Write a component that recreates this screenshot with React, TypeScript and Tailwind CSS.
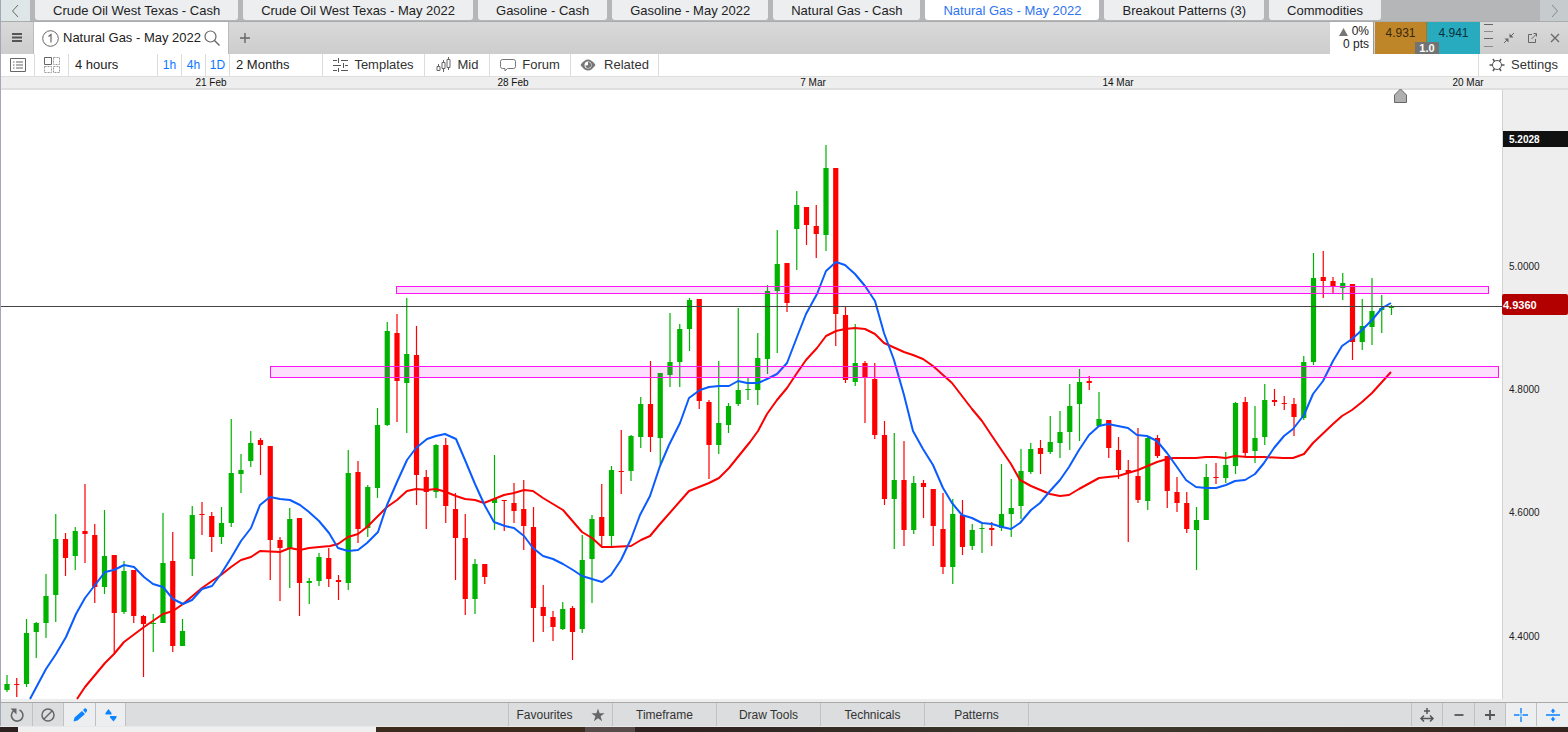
import type { ReactNode } from 'react'
import clsx from 'clsx'

// [colour, high, body top, body bottom, low]
type Candle = ['g' | 'r', number, number, number, number]

const CANDLES: Candle[] = [
  ['g', 675, 684, 690, 692], ['r', 678, 684, 685, 697], ['g', 619, 633, 684, 687], ['g', 622, 623, 632, 658],
  ['g', 574, 596, 623, 638], ['g', 514, 539, 595, 622], ['r', 533, 539, 558, 576], ['g', 527, 531, 556, 570],
  ['r', 484, 531, 534, 563], ['r', 524, 535, 587, 603], ['g', 510, 556, 587, 594], ['r', 555, 555, 613, 653],
  ['g', 561, 571, 612, 614], ['r', 570, 570, 616, 623], ['r', 615, 616, 624, 677], ['g', 614, 623, 624, 652],
  ['g', 513, 563, 623, 623], ['r', 532, 561, 646, 652], ['g', 619, 631, 646, 646], ['g', 506, 515, 559, 576],
  ['r', 502, 514, 515, 535], ['r', 512, 516, 537, 552], ['g', 507, 523, 537, 544], ['g', 419, 473, 523, 527],
  ['g', 454, 470, 474, 493], ['g', 431, 443, 461, 467], ['r', 438, 440, 445, 475], ['r', 446, 446, 540, 580],
  ['r', 537, 540, 548, 601], ['g', 508, 519, 549, 588], ['r', 518, 518, 583, 616], ['g', 578, 581, 583, 604],
  ['g', 553, 557, 581, 586], ['r', 548, 558, 579, 587], ['r', 575, 580, 582, 600], ['g', 450, 473, 583, 590],
  ['r', 461, 472, 529, 543], ['g', 485, 487, 528, 537], ['g', 408, 425, 488, 498], ['g', 322, 331, 425, 426],
  ['r', 314, 333, 381, 422], ['g', 298, 354, 383, 433], ['r', 326, 355, 475, 505], ['r', 470, 477, 492, 529],
  ['g', 444, 445, 492, 498], ['r', 438, 445, 506, 523], ['r', 493, 509, 538, 580], ['r', 514, 538, 599, 615],
  ['g', 559, 564, 599, 614], ['r', 564, 564, 577, 584], ['g', 455, 499, 503, 530], ['r', 500, 500, 501, 531],
  ['r', 483, 503, 511, 523], ['r', 480, 509, 526, 550], ['r', 507, 527, 608, 642], ['r', 585, 607, 616, 632],
  ['r', 611, 617, 627, 641], ['g', 602, 609, 629, 630], ['r', 606, 608, 632, 660], ['g', 535, 560, 629, 633],
  ['g', 515, 519, 559, 603], ['r', 484, 517, 536, 547], ['g', 466, 470, 536, 546], ['r', 430, 471, 472, 494],
  ['g', 435, 436, 471, 481], ['g', 397, 404, 437, 448], ['r', 361, 404, 437, 452], ['g', 373, 373, 438, 464],
  ['g', 313, 362, 375, 387], ['g', 324, 329, 362, 387], ['g', 298, 300, 329, 351], ['r', 299, 299, 401, 409],
  ['r', 400, 402, 445, 479], ['g', 361, 423, 445, 454], ['g', 403, 406, 425, 433], ['g', 308, 390, 404, 406],
  ['g', 377, 389, 390, 400], ['g', 333, 358, 390, 405], ['g', 285, 291, 359, 374], ['g', 230, 264, 291, 353],
  ['r', 263, 263, 303, 312], ['g', 191, 205, 229, 270], ['r', 207, 207, 225, 245], ['r', 205, 226, 234, 258],
  ['g', 145, 168, 235, 251], ['r', 168, 168, 314, 346], ['r', 306, 315, 380, 383], ['g', 324, 363, 382, 386],
  ['r', 361, 363, 377, 423], ['r', 363, 379, 435, 439], ['r', 421, 435, 499, 505], ['g', 433, 480, 499, 549],
  ['r', 441, 480, 530, 546], ['g', 476, 483, 530, 534], ['r', 480, 483, 487, 518], ['r', 489, 489, 526, 546],
  ['r', 493, 529, 567, 574], ['g', 499, 514, 567, 584], ['r', 500, 515, 547, 555], ['g', 524, 530, 546, 550],
  ['g', 522, 528, 529, 553], ['r', 522, 528, 530, 546], ['g', 464, 514, 528, 531], ['g', 479, 508, 514, 537],
  ['g', 449, 471, 506, 519], ['g', 443, 449, 472, 474], ['r', 440, 448, 454, 474], ['g', 416, 442, 452, 454],
  ['g', 411, 432, 443, 458], ['g', 384, 406, 432, 450], ['g', 369, 382, 404, 441], ['r', 376, 381, 383, 390],
  ['g', 392, 419, 426, 426], ['r', 420, 420, 448, 458], ['r', 437, 450, 470, 479], ['r', 460, 470, 473, 542],
  ['r', 428, 476, 500, 503], ['g', 437, 438, 501, 510], ['r', 435, 438, 456, 458], ['r', 456, 456, 491, 508],
  ['r', 477, 492, 503, 512], ['r', 492, 503, 529, 533], ['g', 507, 520, 530, 570], ['g', 464, 477, 520, 520],
  ['r', 463, 477, 478, 484], ['g', 452, 465, 478, 483], ['g', 402, 403, 466, 474], ['r', 397, 402, 453, 457],
  ['g', 406, 438, 451, 463], ['g', 384, 400, 437, 445], ['r', 389, 400, 402, 406], ['r', 396, 403, 404, 410],
  ['r', 398, 404, 417, 436], ['g', 356, 362, 418, 420], ['g', 253, 278, 362, 365], ['r', 251, 277, 281, 298],
  ['r', 277, 281, 287, 294], ['g', 273, 283, 288, 300], ['r', 284, 284, 342, 360], ['g', 299, 326, 342, 350],
  ['g', 278, 311, 327, 345], ['g', 295, 308, 310, 333], ['g', 305, 306, 308, 315],
]

const FAST_AVERAGE =
  '30,699 46,669 56,654 66,637 76,614 85,598 95,585 105,572 114,570 124,565 134,567 144,577 153,584 163,587 173,599 183,604 192,600 202,589 212,586 221,574 231,558 241,541 251,528 260,505 270,497 280,499 290,500 300,505 309,512 319,521 329,533 338,548 348,551 358,550 367,543 378,532 387,505 397,482 407,460 416,448 427,439 436,436 445,434 456,439 465,460 475,484 485,506 494,522 505,526 514,528 524,536 533,548 543,556 553,559 563,564 573,570 582,576 592,579 602,582 611,575 621,560 631,539 640,515 650,496 660,466 669,445 680,423 689,398 700,390 709,387 719,386 729,386 738,381 747,383 758,383 767,379 777,374 787,363 797,337 806,314 817,294 826,271 836,262 845,265 855,274 865,286 875,301 884,333 894,360 904,395 913,431 923,449 933,465 943,488 952,503 962,515 972,518 982,523 992,524 1002,527 1011,529 1020,523 1031,510 1040,503 1050,491 1060,480 1069,467 1079,450 1089,435 1099,426 1108,424 1128,428 1137,435 1147,436 1157,441 1167,453 1177,467 1186,480 1196,487 1206,488 1216,488 1226,485 1235,481 1245,480 1255,474 1264,463 1274,448 1284,436 1293,429 1304,415 1313,394 1323,381 1333,361 1342,346 1352,339 1362,330 1372,320 1382,308 1391,303'

const SLOW_AVERAGE =
  '77,699 85,687 105,663 114,654 124,642 144,627 163,614 173,611 183,604 202,588 212,581 221,575 231,567 241,560 251,557 260,551 280,552 290,548 300,550 309,548 330,546 338,544 348,537 358,534 367,527 387,507 397,500 407,491 416,489 427,490 436,489 446,492 456,496 465,499 475,500 484,503 494,499 504,495 514,493 524,490 533,491 543,498 553,504 563,510 582,532 592,538 602,547 611,547 631,546 641,540 650,536 660,524 689,491 709,483 719,478 729,468 750,442 758,431 767,414 777,400 787,388 797,373 806,360 817,348 826,336 836,331 845,329 855,328 865,329 875,334 884,343 904,352 913,355 923,359 933,366 952,383 972,409 982,421 992,436 1011,464 1020,480 1031,486 1050,494 1060,496 1069,495 1079,489 1099,478 1108,477 1118,476 1138,470 1157,462 1167,459 1173,458 1196,458 1206,457 1216,457 1226,458 1235,456 1247,457 1264,457 1283,458 1293,458 1304,454 1313,443 1333,424 1342,416 1352,410 1362,402 1372,393 1391,372'

const WORKSPACES = [
  'Crude Oil West Texas - Cash',
  'Crude Oil West Texas - May 2022',
  'Gasoline - Cash',
  'Gasoline - May 2022',
  'Natural Gas - Cash',
  'Natural Gas - May 2022',
  'Breakout Patterns (3)',
  'Commodities',
]

const DATES = [
  { label: '21 Feb', x: 211 },
  { label: '28 Feb', x: 513 },
  { label: '7 Mar', x: 813 },
  { label: '14 Mar', x: 1118 },
  { label: '20 Mar', x: 1468 },
]

const PRICES = [
  { label: '5.0000', y: 270 },
  { label: '4.8000', y: 393 },
  { label: '4.6000', y: 516 },
  { label: '4.4000', y: 640 },
]

function Icon({ children }: { children: ReactNode }) {
  return (
    <svg width="16" height="16" viewBox="0 0 16 16" fill="none" stroke="currentColor" aria-hidden="true" className="shrink-0">
      {children}
    </svg>
  )
}

function WorkspaceTabs() {
  return (
    <nav className="flex h-[21px] bg-[#b4b6b8] text-[13px]">
      <button aria-label="Previous" className="w-[29px] shrink-0 bg-[#dfe6e7] flex items-center justify-center text-[#666]">
        <Icon><path d="M10 2 4.500 8 10 14" /></Icon>
      </button>
      <div className="flex-1 flex gap-[5px] pl-[5px] pb-px">
        {WORKSPACES.map((name, i) => (
          <button
            key={name}
            className={clsx(
              'px-[18px] rounded-b-[3px] whitespace-nowrap leading-[19px]',
              i === 5 ? 'bg-white text-[#2f74f0]' : 'bg-[#eceef0] text-[#222]',
            )}
          >
            {name}
          </button>
        ))}
      </div>
      <button aria-label="Next" className="w-7 shrink-0 bg-[#c6cbcd] flex items-center justify-center text-[#888]">
        <Icon><path d="M6 2 11.500 8 6 14" /></Icon>
      </button>
    </nav>
  )
}

function TitleBar() {
  const control = 'w-[23px] flex justify-center'
  return (
    <header className="flex h-[33px] bg-linear-to-b from-[#d9d9d9] to-[#cdcdcd] border-t border-[#a9abad] text-[13px]">
      <button aria-label="Menu" className="w-[33px] border-r border-[#bbb] flex items-center justify-center text-[#555]">
        <Icon><path d="M3 4h10M3 7.500h10M3 11h10" strokeWidth="1.800" /></Icon>
      </button>
      <div className="w-[194px] bg-white flex items-center pl-2 text-[#222]">
        <svg width="17" height="17" viewBox="0 0 17 17" fill="none" stroke="#666" aria-hidden="true">
          <circle cx="8.500" cy="8.500" r="7.800" />
          <path d="M6.500 6.500 9 4.500V12.500" strokeWidth="1.200" />
        </svg>
        <span className="ml-1 flex-1 whitespace-nowrap">Natural Gas - May 2022</span>
        <button aria-label="Search" className="mr-2 text-[#666]">
          <Icon><circle cx="6.500" cy="6.500" r="5.500" strokeWidth="1.200" /><path d="m10.500 10.500 5 5" strokeWidth="1.400" /></Icon>
        </button>
      </div>
      <button aria-label="Add tab" className="w-8 border-l border-[#bbb] flex items-center justify-center text-[#666]">
        <Icon><path d="M8 3v10M3 8h10" strokeWidth="1.400" /></Icon>
      </button>
      <div className="flex-1" />
      <div className="w-11 bg-white border-r border-[#999] pr-1 text-right text-[12px] leading-[13px] pt-[3px] text-[#222]">
        <div className="flex items-center justify-end gap-1">
          <svg width="9" height="8" aria-hidden="true"><path d="M4.500 0 9 8H0z" fill="#777" /></svg>
          0%
        </div>
        <div className="whitespace-nowrap">0 pts</div>
      </div>
      <div className="relative flex pl-px text-[12px] leading-[22px]">
        <button className="w-[52px] bg-[#bf8529] flex justify-center border-r border-[#a87420] text-[#3a2806]">4.931</button>
        <button className="w-[53px] bg-[#28aabf] flex justify-center text-[#08333a]">4.941</button>
        <span className="absolute left-[41px] bottom-0 w-6 h-3 bg-[#737373] text-white font-bold text-[11px] leading-3 text-center">1.0</span>
      </div>
      <div className="flex items-center pr-0.5 text-[#666]">
        <svg width="17" height="30" viewBox="0 0 17 30" stroke="currentColor" aria-hidden="true">
          <path d="M4 1.500h9M4 15.500h9" />
          <path d="M4 8.500h9M4 23.500h9" stroke="#8c8c8c" />
        </svg>
        <button aria-label="Minimise" className={control}>
          <Icon>
            <path d="m9 7 4-4M7 9l-4 4" />
            <path d="M8.500 3.500v4h4zM7.500 12.500v-4h-4z" fill="currentColor" stroke="none" />
          </Icon>
        </button>
        <button aria-label="Pop out" className={control}>
          <Icon><path d="M8 4.500H4.500v8h7V9M7.500 9l5-5M9.500 3.500h3v3" /></Icon>
        </button>
        <button aria-label="Close" className={control}>
          <Icon><path d="m4 4 8 8M12 4l-8 8" strokeWidth="1.200" /></Icon>
        </button>
      </div>
    </header>
  )
}

function Toolbar() {
  const cell = 'border-r border-[#dcdcdc] flex items-center justify-center'
  return (
    <div className="flex h-[22px] bg-white text-[13px] text-[#333]">
      <button aria-label="Watchlist" className={clsx(cell, 'w-[34px] text-[#666]')}>
        <Icon>
          <path d="M.5 1.500h15v13H.5zM6 5h7M6 8h7M6 11h7M3 5h1.500M3 8h1.500M3 11h1.500" />
        </Icon>
      </button>
      <button aria-label="Layout" className={clsx(cell, 'w-[34px] text-[#999]')}>
        <Icon>
          <path d="M.5.5h7v7h-7z" stroke="#666" />
          <path d="M9.500.5h6v7h-6zM.5 9.500h7v6h-7zM9.500 9.500h6v6h-6z" strokeDasharray="2 1" />
        </Icon>
      </button>
      <select aria-label="Interval" className="w-[89px] border-r border-[#dcdcdc] appearance-none pl-[6px] text-[#222]">
        <option>4 hours</option>
      </select>
      <button className={clsx(cell, 'w-6 text-[12px] text-[#0a78ff]')}>1h</button>
      <button className={clsx(cell, 'w-6 text-[12px] text-[#0a78ff]')}>4h</button>
      <button className={clsx(cell, 'w-6 text-[12px] text-[#0a78ff]')}>1D</button>
      <select aria-label="Period" className="w-[93px] border-r border-[#dcdcdc] appearance-none pl-[6px] text-[#222]">
        <option>2 Months</option>
      </select>
      <button className={clsx(cell, 'w-[102px] gap-1.5')}>
        <svg width="15" height="14" viewBox="0 0 15 14" fill="none" stroke="#555" aria-hidden="true">
          <path d="M0 2.500h4M8 2.500h7M5.500 0v5M0 7.500h8M12 7.500h3M10.500 5v5M0 12.500h4M8 12.500h7M5.500 10v4" />
        </svg>
        Templates
      </button>
      <button className={clsx(cell, 'w-[65px] gap-1.5')}>
        <svg width="16" height="16" viewBox="0 0 16 16" fill="none" stroke="#666" aria-hidden="true">
          <path d="M2.500 7v2.500M7.500 3v2.500M7.500 11.500V15M12.500 0v2.500M12.500 10.500V13M1 9.500h3v4H1zM6 5.500h3v6H6zM11 2.500h3v8h-3z" />
        </svg>
        Mid
      </button>
      <button className={clsx(cell, 'w-[81px] gap-1.5')}>
        <Icon><path d="M2.500 2.500h11q2 0 2 2v5q0 2-2 2H7.500L5 14v-2.500H2.500q-2 0-2-2v-5q0-2 2-2z" stroke="#777" /></Icon>
        Forum
      </button>
      <button className={clsx(cell, 'w-[88px] gap-2')}>
        <Icon>
          <path d="M.5 8q7.500-11 15 0-7.500 11-15 0z" fill="#777" stroke="none" />
          <circle cx="8" cy="8" r="3.500" fill="#fff" stroke="none" />
          <path d="M8 8V5a3 3 0 1 1-2.800 3.800z" fill="#777" stroke="none" />
        </Icon>
        Related
      </button>
      <div className="flex-1" />
      <button className="w-[90px] border-l border-[#dcdcdc] flex items-center justify-center gap-1.5">
        <Icon>
          <circle cx="8" cy="8" r="4.500" stroke="#555" />
          <path d="M.5 8h3M12.500 8h3M4 2l1.500 2.500M12 2l-1.500 2.500M4 14l1.500-2.500M12 14l-1.500-2.500" stroke="#555" strokeWidth="1.500" />
        </Icon>
        Settings
      </button>
    </div>
  )
}

function Chart() {
  return (
    <svg
      viewBox="1 76 1567 626"
      role="img"
      aria-label="Natural Gas - May 2022, 4 hour candles"
      className="block w-full h-auto font-['Liberation_Sans',Arial,sans-serif]"
    >
      <rect y="76" width="1568" height="626" fill="#eeeeee" />
      <rect y="76" width="1568" height="1" fill="#dedede" />
      <rect y="88" width="1568" height="2" fill="#dfdfdf" />
      <rect y="90" width="1502" height="609" fill="#fff" />
      <rect x="1502" y="90" width="1" height="609" fill="#d2d2d2" />

      {DATES.map((d) => (
        <text key={d.label} x={d.x} y="86" fontSize="10" textAnchor="middle" fill="#111">{d.label}</text>
      ))}

      {/* Candles */}
      {CANDLES.map(([side, high, top, bottom, low], i) => {
        const x = 7 + i * 9.75
        const fill = side === 'g' ? '#00b300' : '#ff0000'
        return (
          <g key={i} fill={fill}>
            <rect x={x - 0.6} y={high} width="1.200" height={low - high} />
            <rect x={x - 2.6} y={top} width="5.200" height={bottom - top} />
          </g>
        )
      })}

      {/* Moving averages */}
      <polyline points={SLOW_AVERAGE} fill="none" stroke="#fa0000" strokeWidth="2" strokeLinejoin="round" />
      <polyline points={FAST_AVERAGE} fill="none" stroke="#0a5cff" strokeWidth="2" strokeLinejoin="round" />

      {/* Resistance zones */}
      <rect x="396.500" y="286.500" width="1092" height="7" fill="#f000f0" fillOpacity=".13" stroke="#ff14f4" />
      <rect x="270.500" y="366.500" width="1228" height="11" fill="#f000f0" fillOpacity=".13" stroke="#ff14f4" />

      {/* Last price */}
      <rect y="306" width="1502" height="1" fill="#444" />
      <path d="M1394.500 102.500V95l6-6 6 6v7.500z" fill="#b0b0b0" stroke="#666" />

      {PRICES.map((p) => (
        <text key={p.label} x="1509" y={p.y} fontSize="10" fill="#222">{p.label}</text>
      ))}
      <rect x="1503" y="131" width="65" height="16" fill="#111" />
      <text x="1509" y="143" fontSize="10" fontWeight="bold" fill="#fff">5.2028</text>
      <rect x="1502" y="294" width="66" height="21" rx="2" fill="#b20000" />
      <text x="1503" y="309" fontSize="11" fontWeight="bold" fill="#fff">4.9360</text>
    </svg>
  )
}

function BottomBar() {
  const cell = 'border-r border-[#bfc1c3] flex items-center justify-center'
  return (
    <footer className="flex h-6 bg-[#dbddde] border-t border-[#a9a9a9] text-[12px] text-[#333]">
      <div className="flex text-[#666]">
        <button aria-label="Reset" className={clsx(cell, 'w-8')}>
          <Icon><path d="M10.500 3a5.800 5.800 0 1 1-6 .8" strokeWidth="1.600" /><path d="M1.500 1.500h6v6z" fill="currentColor" stroke="none" /></Icon>
        </button>
        <button aria-label="Clear" className={clsx(cell, 'w-[31px]')}>
          <Icon><circle cx="8" cy="8" r="6" strokeWidth="1.500" /><path d="m4 12 8-8" strokeWidth="1.500" /></Icon>
        </button>
        <button aria-label="Draw" className={clsx(cell, 'w-8 bg-[#eceef0] text-[#0a84ff]')}>
          <Icon><path d="m1.500 14.500 1-4L10 4l3 3-7.500 6.500zM11 3l1.500-1.500q1-.5 2 .5t.5 2L13.500 6z" fill="currentColor" stroke="none" /></Icon>
        </button>
        <button aria-label="Scale" className={clsx(cell, 'w-[30px] bg-[#eceef0] text-[#0a84ff]')}>
          <Icon><path d="M2.500 7.500V6L5.500 2 8.500 6v1.500zM7 9v1.500l3.500 4 3-4V9z" fill="currentColor" stroke="none" /></Icon>
        </button>
      </div>
      <div className="flex-1 flex justify-center">
        <button className={clsx(cell, 'w-[105px] border-l gap-[18px]')}>
          Favourites
          <svg width="14" height="14" viewBox="0 0 14 14" aria-hidden="true">
            <path d="m7 .5 1.600 4.800h5L9.600 8.300l1.500 4.900L7 10.200l-4.100 3 1.500-4.900-4-3h5z" fill="#666" />
          </svg>
        </button>
        <button className={clsx(cell, 'w-26')}>Timeframe</button>
        <button className={clsx(cell, 'w-26')}>Draw Tools</button>
        <button className={clsx(cell, 'w-26')}>Technicals</button>
        <button className={clsx(cell, 'w-26')}>Patterns</button>
      </div>
      <div className="flex border-l border-[#bfc1c3] text-[#555]">
        <button aria-label="Fit width" className={clsx(cell, 'w-[31px]')}>
          <Icon><path d="M8 1v6M5 4h6M3 11.500h10M5 8.500l-3 3 3 3M11 8.500l3 3-3 3" strokeWidth="1.500" /></Icon>
        </button>
        <button aria-label="Zoom out" className={clsx(cell, 'w-8')}>
          <Icon><path d="M3.500 8h9" strokeWidth="1.800" /></Icon>
        </button>
        <button aria-label="Zoom in" className={clsx(cell, 'w-[31px]')}>
          <Icon><path d="M3 8h10M8 3v10" strokeWidth="1.800" /></Icon>
        </button>
        <button aria-label="Crosshair" className={clsx(cell, 'w-[31px] bg-[#eceef0] text-[#0a84ff]')}>
          <Icon><path d="M1 8h5.500M9.500 8H15M8 1v5.500M8 9.500V15M7.500 8h1" strokeWidth="1.400" /></Icon>
        </button>
        <button aria-label="Fit height" className="w-[31px] bg-[#eceef0] text-[#0a84ff] flex items-center justify-center">
          <Icon>
            <path d="M1 8h14M8 3v3M8 10v3" strokeWidth="1.600" />
            <path d="m5.500 4.500 2.500-3 2.500 3zM5.500 11.500l2.500 3 2.500-3z" fill="currentColor" stroke="none" />
          </Icon>
        </button>
      </div>
    </footer>
  )
}

export default function App() {
  return (
    <div className="w-full overflow-hidden font-['Liberation_Sans',Arial,sans-serif]">
      <div className="border-l border-[#a3a8b8]">
        <WorkspaceTabs />
        <TitleBar />
        <Toolbar />
        <Chart />
        <BottomBar />
      </div>
      {/* Desktop behind the window */}
      <div className="flex h-1.5 border-t border-[#e8e8e8] bg-[#2e2120]">
        <div className="w-[18px]" />
        <div className="w-[358px] bg-[#f0f0f0]" />
        <div className="w-[209px] bg-[#3c2a1c]" />
        <div className="w-[50px] bg-[#574c49]" />
        <div className="flex-1 bg-linear-to-r from-[#2e2120] via-[#3d3a2c] to-[#35241e]" />
      </div>
    </div>
  )
}
